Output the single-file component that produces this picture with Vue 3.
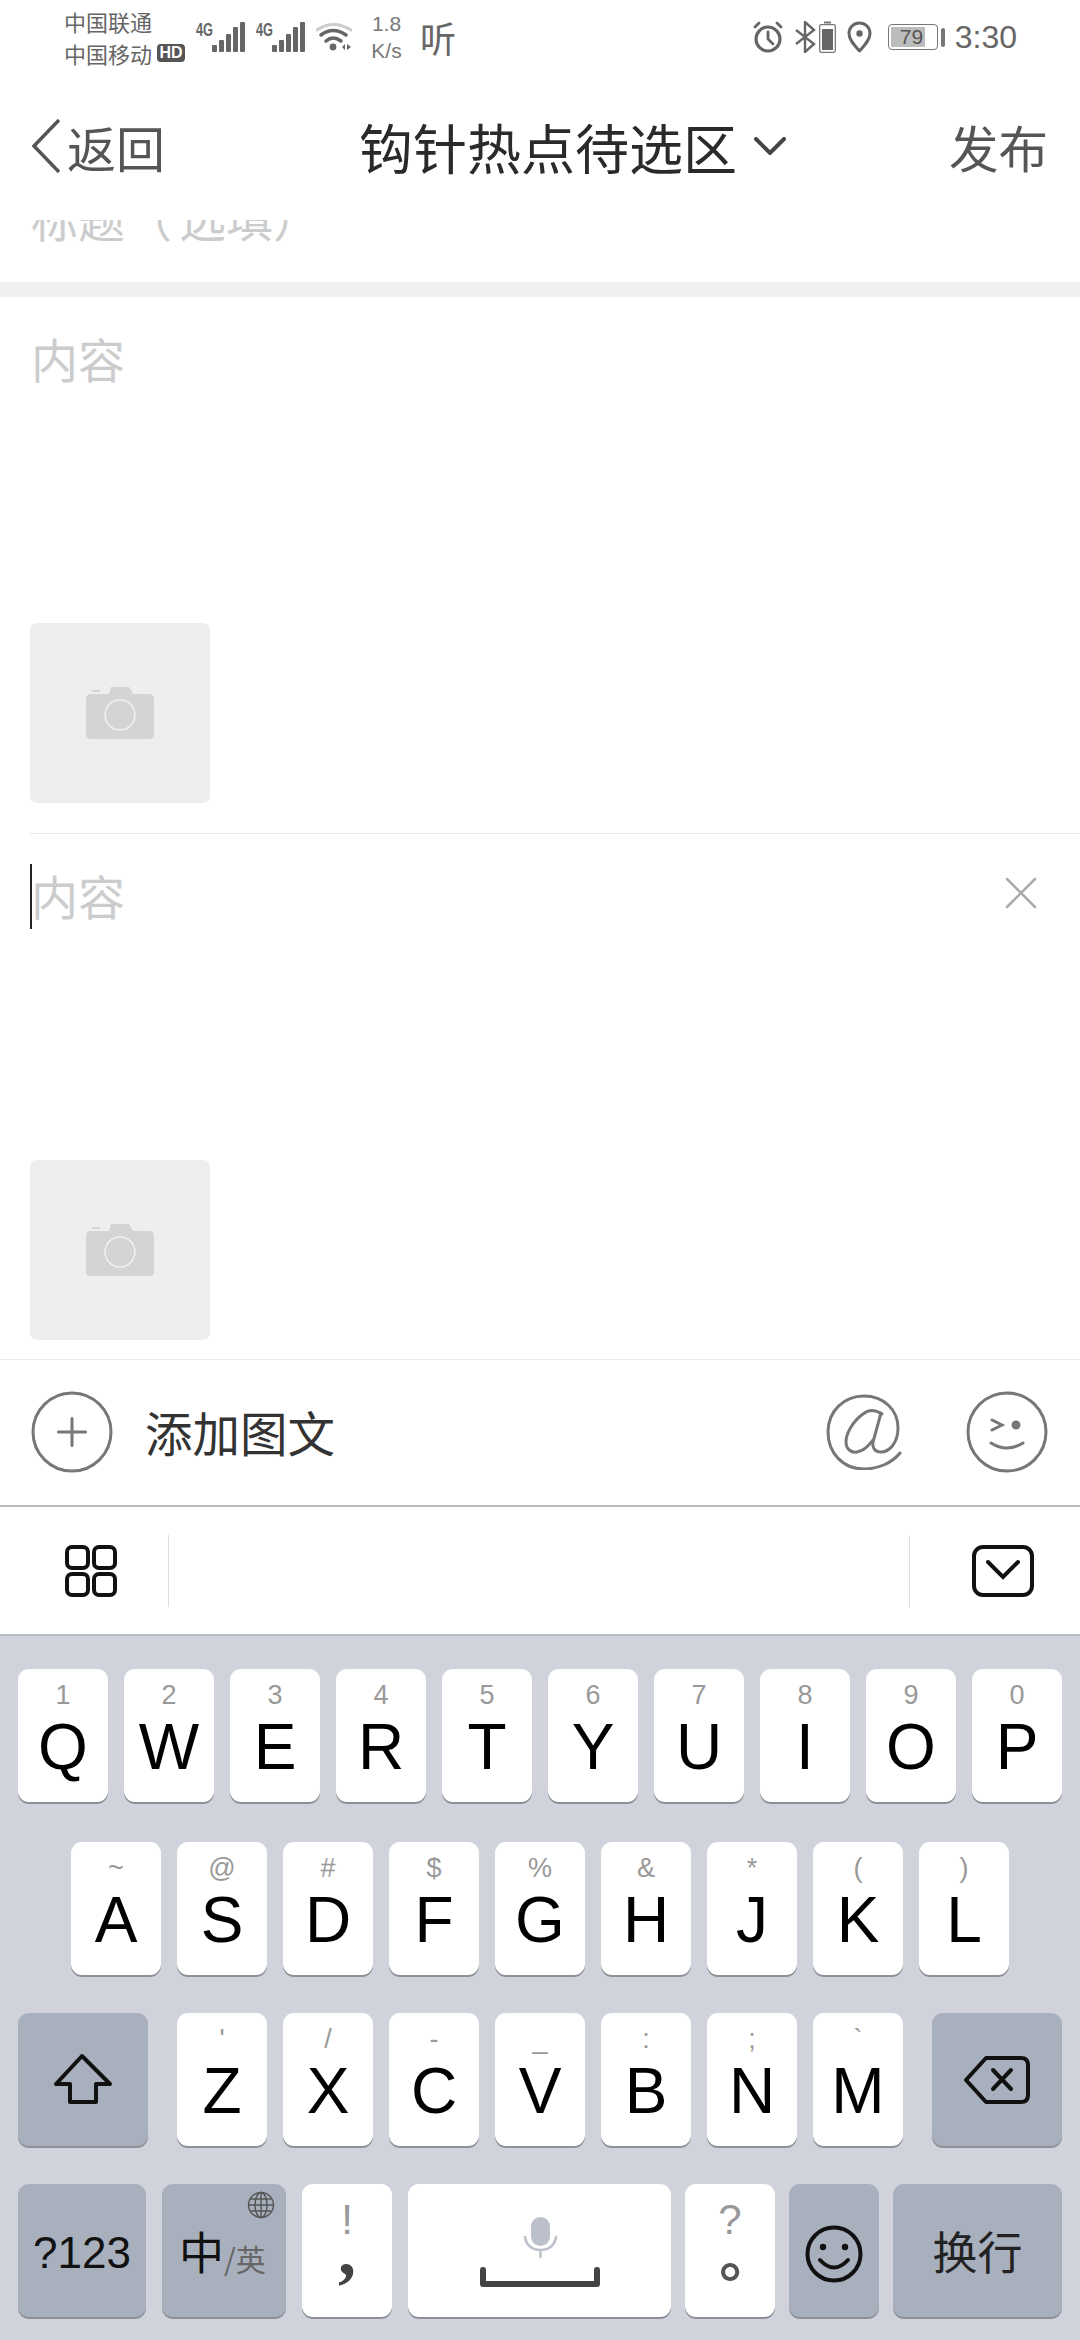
<template>
  <div class="page">
    <!-- status bar -->
    <div class="status">
      <div class="carriers">
        <div>中国联通</div>
        <div class="carrier2">中国移动<span class="hd">HD</span></div>
      </div>
      <svg v-for="n in 2" :key="n" class="signal" width="50" height="32" viewBox="0 0 50 32">
        <text x="0" y="15" class="four-g" textLength="17" lengthAdjust="spacingAndGlyphs">4G</text>
        <rect x="16" y="24" width="5" height="7" rx="1" />
        <rect x="23" y="19" width="5" height="12" rx="1" />
        <rect x="30" y="13" width="5" height="18" rx="1" />
        <rect x="37" y="6" width="5" height="25" rx="1" />
        <rect x="44" y="1" width="5" height="30" rx="1" />
      </svg>
      <svg class="wifi" width="36" height="30" viewBox="0 0 36 30" fill="none" stroke-linecap="round">
        <path d="M1 8 Q17 -3 35 8" stroke="#ccc" stroke-width="3" />
        <path d="M5 13 Q17 4 30 13" stroke="#666" stroke-width="3.5" />
        <path d="M10 19 Q17 13 25 19" stroke="#666" stroke-width="3.5" />
        <circle cx="17" cy="25" r="3.4" fill="#666" />
        <path d="M26 25 L29 22 V28 Z M31 22 L35 25 L31 28 Z" fill="#666" />
      </svg>
      <div class="speed"><div>1.8</div><div>K/s</div></div>
      <div class="listen">听</div>
      <div class="status-right">
        <svg width="30" height="32" viewBox="0 0 30 32" fill="none" stroke="#666" stroke-linecap="round">
          <circle cx="15" cy="18" r="12" stroke-width="3.2" />
          <path d="M15 11 V18 L20 23" stroke-width="2.8" />
          <path d="M2 6 L6 2 M28 6 L24 2" stroke-width="2.8" />
        </svg>
        <svg class="bt" width="21" height="32" viewBox="0 0 21 32" fill="none" stroke="#666" stroke-width="2.4">
          <path d="M1 9 L19 23 L10 31 V1 L19 9 L1 23" />
        </svg>
        <svg class="small-batt" width="17" height="32" viewBox="0 0 17 32">
          <rect x="0.7" y="3.7" width="15.6" height="27.6" rx="1.5" fill="none" stroke="#777" stroke-width="1.3" />
          <rect x="5" y="0.5" width="7" height="2" fill="#777" />
          <rect x="3" y="8" width="11" height="21" fill="#666" />
        </svg>
        <svg class="pin" width="25" height="32" viewBox="0 0 25 32" fill="none">
          <path d="M12.5 30 C6 23 2 18 2 12.5 C2 6.5 6.5 2 12.5 2 C18.5 2 23 6.5 23 12.5 C23 18 19 23 12.5 30 Z" stroke="#666" stroke-width="3" stroke-linejoin="round" />
          <circle cx="12.5" cy="12.5" r="3.2" fill="#666" />
        </svg>
        <div class="battery">
          <div class="battery-fill"></div>
          <span class="battery-num">79</span>
        </div>
        <div class="battery-nub"></div>
        <div class="time">3:30</div>
      </div>
    </div>

    <!-- nav -->
    <div class="nav">
      <div class="back">
        <svg width="28" height="54" viewBox="0 0 28 54" fill="none" stroke="#555" stroke-width="3.5">
          <path d="M27 1 L2 27 L27 53" />
        </svg>
        <span>返回</span>
      </div>
      <div class="nav-title">
        <span>钩针热点待选区</span>
        <svg width="32" height="18" viewBox="0 0 32 18" fill="none" stroke="#444" stroke-width="4" stroke-linecap="round">
          <path d="M2 2 L16 16 L30 2" />
        </svg>
      </div>
      <div class="publish">发布</div>
    </div>

    <!-- scrolled content -->
    <div class="title-clip"><div class="title-ph">标题<span class="paren">（</span>选填<span class="paren">）</span></div></div>
    <div class="band"></div>

    <div class="section first">
      <div class="ph-row"><span class="ph">内容</span></div>
      <div class="pic">
        <svg width="68" height="54" viewBox="0 0 68 54">
          <path d="M23 8 L25 1 H43 L47 8 H63 Q68 8 68 13 V49 Q68 53 63 53 H5 Q0 53 0 49 V13 Q0 8 5 8 Z" fill="#d4d4d4" />
          <rect x="6" y="4" width="8" height="2" fill="#d4d4d4" />
          <circle cx="34" cy="29" r="15" fill="none" stroke="#f0f0f0" stroke-width="1.5" />
        </svg>
      </div>
    </div>

    <div class="section second">
      <div class="cursor"></div>
      <div class="ph-row">
        <span class="ph">内容</span>
        <svg class="close" width="32" height="32" viewBox="0 0 32 32" stroke="#aaa" stroke-width="2.5" stroke-linecap="round">
          <path d="M2 2 L30 30 M30 2 L2 30" />
        </svg>
      </div>
      <div class="pic">
        <svg width="68" height="54" viewBox="0 0 68 54">
          <path d="M23 8 L25 1 H43 L47 8 H63 Q68 8 68 13 V49 Q68 53 63 53 H5 Q0 53 0 49 V13 Q0 8 5 8 Z" fill="#d4d4d4" />
          <rect x="6" y="4" width="8" height="2" fill="#d4d4d4" />
          <circle cx="34" cy="29" r="15" fill="none" stroke="#f0f0f0" stroke-width="1.5" />
        </svg>
      </div>
    </div>

    <!-- add bar -->
    <div class="addbar">
      <svg width="82" height="82" viewBox="0 0 82 82" fill="none" stroke="#777" stroke-width="3">
        <circle cx="41" cy="41" r="39" />
        <path d="M27.5 41 H54.5 M41 27.5 V54.5" stroke-linecap="round" />
      </svg>
      <span class="add-text">添加图文</span>
      <svg class="at" width="76" height="76" viewBox="0 0 76 76" fill="none" stroke="#777" stroke-width="3" stroke-linecap="round">
        <path d="M74 59 C66 69 52 75 38 75 C17 75 2 59 2 38 C2 17 18 2 38 2 C58 2 72 16 72 34 C72 48 64 58 55 58 C49 58 46 54 47 48 L55 19" />
        <path d="M56 20 C50 16 43 15 37 20 C26 28 20 40 20 48 C20 55 25 59 31 58 C39 57 44 50 47 46" />
      </svg>
      <svg class="wink" width="82" height="82" viewBox="0 0 82 82" fill="none" stroke="#777" stroke-width="3" stroke-linecap="round">
        <circle cx="41" cy="41" r="39" />
        <path d="M26 29 L36 34 L26 39" stroke-width="3" />
        <circle cx="50" cy="34" r="4.5" fill="#777" stroke="none" />
        <path d="M25 52 Q41 62 57 52" stroke-width="3" />
      </svg>
    </div>

    <!-- keyboard toolbar -->
    <div class="toolbar">
      <svg class="grid-icon" width="54" height="54" viewBox="0 0 54 54" fill="none" stroke="#111" stroke-width="4">
        <rect x="3" y="3" width="21" height="21" rx="5" />
        <rect x="30" y="3" width="21" height="21" rx="5" />
        <rect x="3" y="30" width="21" height="21" rx="5" />
        <rect x="30" y="30" width="21" height="21" rx="5" />
      </svg>
      <div class="tb-line"></div>
      <div class="tb-line right"></div>
      <svg class="kb-down" width="62" height="52" viewBox="0 0 62 52" fill="none" stroke="#111" stroke-width="4">
        <rect x="2" y="2" width="58" height="48" rx="9" />
        <path d="M16 17 L31 32 L46 17" stroke-linecap="round" />
      </svg>
    </div>

    <!-- keyboard -->
    <div class="kb">
      <div class="row row1">
        <div v-for="k in row1" :key="k[1]" class="key">
          <span class="sub">{{ k[0] }}</span><span class="letter">{{ k[1] }}</span>
        </div>
      </div>
      <div class="row row2">
        <div v-for="k in row2" :key="k[1]" class="key">
          <span class="sub">{{ k[0] }}</span><span class="letter">{{ k[1] }}</span>
        </div>
      </div>
      <div class="row row3">
        <div class="key fn wide shift">
          <svg width="60" height="52" viewBox="0 0 60 52" fill="none" stroke="#111" stroke-width="4" stroke-linejoin="round">
            <path d="M29 3 L3 31 H17 V49 H43 V31 H57 Z" />
          </svg>
        </div>
        <div v-for="k in row3" :key="k[1]" class="key">
          <span class="sub">{{ k[0] }}</span><span class="letter">{{ k[1] }}</span>
        </div>
        <div class="key fn wide del">
          <svg width="68" height="50" viewBox="0 0 68 50" fill="none" stroke="#111" stroke-width="4" stroke-linejoin="round" stroke-linecap="round">
            <path d="M3 25 L23 3 H58 Q65 3 65 10 V40 Q65 47 58 47 H23 Z" />
            <path d="M30 15 L48 34 M48 15 L30 34" />
          </svg>
        </div>
      </div>
      <div class="row row4">
        <div class="key fn k123">?123</div>
        <div class="key fn klang">
          <svg class="globe" width="28" height="28" viewBox="0 0 28 28" fill="none" stroke="#555" stroke-width="1.4">
            <circle cx="14" cy="14" r="12.5" />
            <ellipse cx="14" cy="14" rx="6" ry="12.5" />
            <path d="M14 1.5 V26.5 M1.5 14 H26.5 M3.5 8 H24.5 M3.5 20 H24.5" />
          </svg>
          <span class="zh">中</span><span class="en">/英</span>
        </div>
        <div class="key kpunct">
          <span class="p-top">!</span><span class="p-comma">,</span>
        </div>
        <div class="key kspace">
          <svg width="120" height="72" viewBox="0 0 120 72" fill="none" stroke-linecap="round">
            <rect x="51" y="0" width="19" height="29" rx="9.5" fill="#bcc0ca" />
            <path d="M45 20 C46 28 52 33 60.5 33 C69 33 75 28 76 20" stroke="#bcc0ca" stroke-width="2.5" />
            <path d="M60.5 33 V40" stroke="#bcc0ca" stroke-width="2.5" />
            <path d="M3 53 V67 H117 V53" stroke="#444" stroke-width="6" stroke-linejoin="round" />
          </svg>
        </div>
        <div class="key kpunct narrow">
          <span class="p-top">?</span><span class="p-dot">。</span>
        </div>
        <div class="key fn kemoji narrow">
          <svg width="58" height="58" viewBox="0 0 58 58" fill="none" stroke="#111" stroke-width="4" stroke-linecap="round">
            <circle cx="29" cy="29" r="26.5" />
            <circle cx="18" cy="22" r="3.2" fill="#111" stroke="none" />
            <circle cx="40" cy="22" r="3.2" fill="#111" stroke="none" />
            <path d="M15 35 Q29 50 43 35" />
          </svg>
        </div>
        <div class="key fn kenter">换行</div>
      </div>
    </div>
  </div>
</template>

<script setup>
const row1 = [
  ['1', 'Q'], ['2', 'W'], ['3', 'E'], ['4', 'R'], ['5', 'T'],
  ['6', 'Y'], ['7', 'U'], ['8', 'I'], ['9', 'O'], ['0', 'P'],
]
const row2 = [
  ['~', 'A'], ['@', 'S'], ['#', 'D'], ['$', 'F'], ['%', 'G'],
  ['&', 'H'], ['*', 'J'], ['(', 'K'], [')', 'L'],
]
const row3 = [
  ["'", 'Z'], ['/', 'X'], ['-', 'C'], ['_', 'V'], [':', 'B'], [';', 'N'], ['`', 'M'],
]
</script>

<style>
html, body {
  margin: 0;
  background: #fff;
}
</style>

<style scoped>
.page {
  width: 1080px;
  height: 2340px;
  overflow: hidden;
  background: #fff;
  font-family: "Noto Sans CJK SC", "Liberation Sans", sans-serif;
  display: flex;
  flex-direction: column;
}

/* status bar */
.status {
  height: 90px;
  box-sizing: border-box;
  padding: 0 0 16px 64px;
  display: flex;
  align-items: center;
  color: #666;
  flex: none;
}
.carriers {
  width: 121px;
  font-size: 22px;
  line-height: 32px;
  white-space: nowrap;
}
.carrier2 {
  display: flex;
  align-items: center;
}
.hd {
  margin-left: 5px;
  width: 28px;
  height: 18px;
  border-radius: 4px;
  background: #555;
  color: #fff;
  font: bold 16px/18px "Liberation Sans", sans-serif;
  text-align: center;
}
.signal {
  margin-left: 11px;
  fill: #666;
}
.signal + .signal {
  margin-left: 10px;
}
.four-g {
  font: bold 18px "Liberation Sans", sans-serif;
  fill: #666;
}
.wifi {
  margin-left: 10px;
}
.speed {
  margin-left: 18px;
  width: 33px;
  text-align: center;
  font: 21px/27px "Liberation Sans", sans-serif;
  color: #777;
}
.listen {
  margin-left: 17px;
  font-size: 36px;
  line-height: 40px;
  color: #666;
}
.status-right {
  margin-left: auto;
  padding-right: 63px;
  display: flex;
  align-items: center;
}
.bt {
  margin-left: 12px;
}
.small-batt {
  margin-left: 3px;
}
.pin {
  margin-left: 11px;
}
.battery {
  margin-left: 16px;
  width: 50px;
  height: 26px;
  box-sizing: border-box;
  border: 1.5px solid #777;
  border-radius: 4px;
  padding: 2px;
  position: relative;
}
.battery-fill {
  width: 34px;
  height: 100%;
  background: #bdbdbd;
}
.battery-num {
  position: absolute;
  left: 11px;
  top: 0;
  font: 21px/23px "Liberation Sans", sans-serif;
  color: #555;
}
.battery-nub {
  margin-left: 3px;
  width: 4px;
  height: 19px;
  border-radius: 2px;
  background: #777;
}
.time {
  margin-left: 10px;
  font: 32px/36px "Liberation Sans", sans-serif;
  color: #666;
}

/* nav */
.nav {
  height: 130px;
  box-sizing: border-box;
  padding: 0 32px 18px;
  display: flex;
  align-items: center;
  flex: none;
}
.back {
  display: flex;
  align-items: center;
  gap: 7px;
  font-size: 49px;
  color: #555;
}
.nav-title {
  margin-left: 194px;
  display: flex;
  align-items: center;
  gap: 17px;
  font-size: 54px;
  color: #2a2a2a;
  white-space: nowrap;
}
.publish {
  margin-left: auto;
  font-size: 49.5px;
  color: #555;
}

/* scrolled form */
.title-clip {
  height: 62px;
  overflow: hidden;
  flex: none;
}
.title-ph {
  margin-top: -33px;
  padding-left: 31px;
  font-size: 47px;
  line-height: 60px;
  color: #ccc;
}
.paren {
  font-family: "Noto Sans CJK TC", sans-serif;
  margin-right: 7px;
}
.band {
  height: 15px;
  background: #f0f0f0;
  flex: none;
}
.section {
  margin-left: 30px;
  box-sizing: border-box;
  padding-top: 31px;
  flex: none;
  position: relative;
}
.section.first {
  height: 537px;
  border-bottom: 1px solid #e8e8e8;
}
.section.second {
  height: 525px;
}
.ph-row {
  height: 295px;
  padding-right: 43px;
  display: flex;
  justify-content: space-between;
  align-items: flex-start;
}
.ph {
  padding-left: 1px;
  font-size: 47px;
  line-height: 60px;
  color: #ccc;
}
.close {
  margin-top: 12px;
}
.cursor {
  position: absolute;
  left: 0;
  top: 30px;
  width: 2px;
  height: 65px;
  background: #222;
}
.pic {
  width: 180px;
  height: 180px;
  border-radius: 7px;
  background: #eee;
  display: flex;
  align-items: center;
  justify-content: center;
}

/* add bar */
.addbar {
  height: 148px;
  box-sizing: border-box;
  border-top: 1px solid #ececec;
  border-bottom: 2px solid #bbb;
  padding: 0 32px 2px 31px;
  display: flex;
  align-items: center;
  flex: none;
}
.add-text {
  margin-left: 32px;
  font-size: 47.5px;
  color: #333;
}
.at {
  margin-left: auto;
}
.wink {
  margin-left: 64px;
}

/* toolbar */
.toolbar {
  height: 127px;
  display: flex;
  align-items: center;
  flex: none;
}
.grid-icon {
  margin-left: 64px;
}
.tb-line {
  margin-left: 50px;
  width: 1px;
  height: 72px;
  background: #ddd;
}
.tb-line.right {
  margin-left: auto;
}
.kb-down {
  margin-left: 62px;
  margin-right: 46px;
}

/* keyboard */
.kb {
  flex: 1;
  box-sizing: border-box;
  border-top: 2px solid #b8bcc6;
  background: #d0d3dc;
  padding: 33px 18px 0;
  display: flex;
  flex-direction: column;
  gap: 38px;
}
.row {
  display: flex;
  gap: 16px;
  height: 133px;
}
.row1 {
  margin-bottom: 2px;
}
.row2 {
  padding-left: 53px;
}
.row4 {
  gap: 14px;
}
.key {
  width: 90px;
  height: 133px;
  box-sizing: border-box;
  flex: none;
  border-radius: 11px;
  background: #fff;
  box-shadow: 0 2px 0 #8e9098;
  display: flex;
  flex-direction: column;
  align-items: center;
  font-family: "Liberation Sans", sans-serif;
  color: #000;
}
.sub {
  margin-top: 10px;
  height: 32px;
  font-size: 27px;
  line-height: 32px;
  color: #999;
}
.letter {
  margin-top: 4px;
  font-size: 64px;
  line-height: 64px;
}
.fn {
  background: #a9b0bd;
  align-items: center;
  justify-content: center;
}
.wide {
  width: 130px;
}
.shift {
  margin-right: 13px;
  padding-bottom: 2px;
}
.del {
  margin-left: 13px;
}
.k123 {
  width: 128px;
  padding-top: 4px;
  font-size: 44px;
  color: #111;
}
.klang {
  width: 124px;
  margin-left: 2px;
  flex-direction: row;
  padding: 0 0 0 17px;
  justify-content: flex-start;
  align-items: center;
  position: relative;
}
.globe {
  position: absolute;
  right: 11px;
  top: 7px;
}
.zh {
  font: 45px/50px "Noto Sans CJK SC", sans-serif;
  color: #111;
}
.en {
  margin-top: 14px;
  font: 30px/40px "Noto Sans CJK SC", sans-serif;
  color: #666;
}
.kpunct {
  margin-left: 2px;
  justify-content: flex-start;
}
.kpunct.narrow {
  margin-left: 0;
}
.p-top {
  margin-top: 15px;
  font-size: 42px;
  line-height: 42px;
  color: #999;
}
.p-comma {
  font: bold 72px/20px "Liberation Serif", serif;
  color: #444;
}
.p-dot {
  margin-top: 3px;
  font: bold 56px/50px "Noto Sans CJK TC", sans-serif;
  color: #555;
}
.kspace {
  width: 263px;
  margin-left: 2px;
  justify-content: flex-start;
  padding-top: 33px;
}
.kemoji {
  width: 90px;
  padding-top: 6px;
}
.kenter {
  width: 169px;
  font: 45px "Noto Sans CJK SC", sans-serif;
  color: #222;
}
</style>
